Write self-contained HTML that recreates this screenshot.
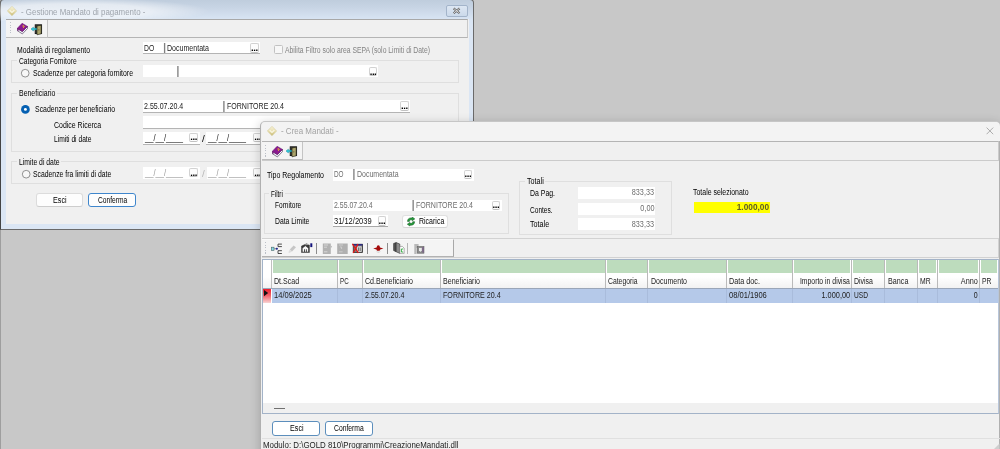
<!DOCTYPE html>
<html lang="it"><head><meta charset="utf-8"><title>Crea Mandati</title>
<style>
html,body{margin:0;padding:0;}
body{width:1000px;height:449px;overflow:hidden;background:#c8c8c8;position:relative;font-family:"Liberation Sans",sans-serif;font-size:11px;}
div,span,svg{position:absolute;box-sizing:border-box;}
.t{white-space:pre;}

.tb{background:#fff;}
.btn{background:#fdfdfd;border:1px solid #dcdcdc;border-bottom-color:#cdcdcd;border-radius:3px;}
.dots{background:#fdfdfd;border:1px solid #d2d2d2;border-bottom-color:#c2c2c2;border-radius:2px;}
.grp{border:1px solid #dfdfdf;}

</style></head><body>
<div id="root" style="left:0;top:0;width:1000px;height:449px;will-change:transform;">
<div style="left:0px;top:229px;width:1.2px;height:220px;background:#9e9e9e;"></div>
<div style="left:0;top:-1px;width:474px;height:231px;background:linear-gradient(180deg,#bfcddd 0,#c8d5e5 8px,#d8e4f3 19px,#dbe6f4 24px,#dbe6f4 100%);border:1px solid #6a6a6a;border-left:1.5px solid #444;border-radius:4px 4px 0 0;"></div>
<div style="left:6px;top:19px;width:463px;height:205px;background:#f0f0f0;"></div>
<div style="left:-60px;top:-2px;width:270px;height:26px;background:radial-gradient(ellipse closest-side at center,rgba(255,255,255,0.6) 0,rgba(255,255,255,0.55) 55%,rgba(255,255,255,0) 100%);"></div>
<svg style="left:7.2px;top:6.2px" width="10" height="10" viewBox="0 0 10 10"><defs><linearGradient id="g1" x1="0" y1="0" x2="0" y2="1"><stop offset="0" stop-color="#f6f1d8"/><stop offset="0.5" stop-color="#e9e0b2"/><stop offset="1" stop-color="#c7b970"/></linearGradient></defs><path d="M5 0.3 L9.7 5 L5 9.7 L0.3 5 Z" fill="url(#g1)" stroke="#d2c994" stroke-width="0.5"/><path d="M2.6 4.2 L5 6.4 L7.4 4.2" fill="none" stroke="#fbf8e8" stroke-width="1.1"/></svg>
<span id="t0" class="t" style="top:5.10px;font-size:9.5px;line-height:13px;color:#9fa5ad;left:20.8px;transform:scaleX(0.8324);transform-origin:left center;">- Gestione Mandato di pagamento -</span>
<div style="left:446px;top:5px;width:22px;height:12px;border:1px solid #a3b4ca;border-radius:2px;background:linear-gradient(180deg,#dde7f3,#cbd9ea);"></div>
<svg style="left:452px;top:7px" width="10" height="8" viewBox="0 0 10 8"><path d="M1.6 1.4 L7.6 6.2 M7.6 1.4 L1.6 6.2" stroke="#5c5c5c" stroke-width="2" fill="none"/><path d="M1.6 1.4 L7.6 6.2 M7.6 1.4 L1.6 6.2" stroke="#f4f4f4" stroke-width="0.8" fill="none"/></svg>
<div style="left:6px;top:19px;width:462px;height:19px;background:#f0f0f0;border:1px solid #b4b4b4;border-left:0;border-top-color:#a8a8a8;border-right-color:#c8c8c8;"></div>
<div style="left:6px;top:19.5px;width:41.5px;height:18px;background:#f4f4f4;border-right:1px solid #c4c4c4;border-bottom:1px solid #bcbcbc;"></div>
<div style="left:10.2px;top:22.3px;width:1px;height:12px;background:repeating-linear-gradient(180deg,#bcc0c8 0 1.1px,transparent 1.1px 2.6px);"></div>
<svg style="left:16.6px;top:23.3px" width="12" height="12" viewBox="0 0 12 12"><path d="M0.2 5.4 L5.4 8.6 L10.5 3.4 L10.5 5.5 L5.4 10.9 L0.2 7.6 Z" fill="#f4f4fa" stroke="#3a2a4a" stroke-width="0.6"/><path d="M5.1 0.3 L10.5 3.4 L5.4 8.6 L0.2 5.4 Z" fill="#8a1a90" stroke="#5e0e66" stroke-width="0.5"/><path d="M0.3 5.6 L0.3 7.5 L1.4 8.2 L1.4 6.3 Z" fill="#6a1270"/><path d="M5.4 3 L6.8 2.8 L7.2 3.8 L6 4.6 M5.2 5.8 L5.3 5.9" stroke="#f4c22c" stroke-width="1" fill="none"/></svg>
<svg style="left:30.8px;top:23.5px" width="12" height="12" viewBox="0 0 12 12"><rect x="4.2" y="0.8" width="6.4" height="8.8" fill="#3c3c30" stroke="#151515" stroke-width="0.9"/><path d="M6 2 L10.2 1.2 L10.2 9.8 L6 10.8 Z" fill="#aca66c" stroke="#1c1c12" stroke-width="0.6"/><path d="M7 6 L8.4 5.8" stroke="#55502c" stroke-width="0.7"/><path d="M0 5 L2.4 3.2 L2.4 4.3 L5.6 4.3 L5.6 5.8 L2.4 5.8 L2.4 6.9 Z" fill="#2ad4e6" stroke="#13788c" stroke-width="0.45"/></svg>
<span id="t1" class="t" style="top:45.10px;font-size:8.5px;line-height:11px;color:#000;left:17px;transform:scaleX(0.8045);transform-origin:left center;">Modalità di regolamento</span>
<div style="left:143px;top:42px;width:117px;height:12.4px;background:#fff;border-bottom:1px solid #b4b4b4;"></div>
<span id="t2" class="t" style="top:43.10px;font-size:8.5px;line-height:11px;color:#222;left:144px;transform:scaleX(0.8000);transform-origin:left center;">DO</span>
<div style="left:163px;top:43px;width:1px;height:10px;background:#f6f6f6;"></div>
<div style="left:164px;top:43px;width:1px;height:10px;background:#808080;"></div>
<div style="left:165px;top:43px;width:1px;height:10px;background:#dddddd;"></div>
<span id="t3" class="t" style="top:43.10px;font-size:8.5px;line-height:11px;color:#222;left:167.2px;transform:scaleX(0.8307);transform-origin:left center;">Documentata</span>
<div class="dots" style="left:250.2px;top:43.4px;width:8.6px;height:9.2px;"></div>
<span id="t4" class="t" style="top:41.10px;font-size:9.5px;line-height:13px;color:#000;font-weight:bold;left:251.1px;letter-spacing:-0.45px;">...</span>
<div style="left:274.2px;top:45.4px;width:8.4px;height:8.4px;background:#f7f7f7;border:0.8px solid #c2c2c2;border-radius:1.5px;"></div>
<span id="t5" class="t" style="top:45.10px;font-size:8.5px;line-height:11px;color:#838383;left:285px;transform:scaleX(0.8021);transform-origin:left center;">Abilita Filtro solo area SEPA (solo Limiti di Date)</span>
<div class="grp" style="left:11px;top:60px;width:447.5px;height:23px;"></div>
<div style="left:16.6px;top:59px;width:61.6px;height:3px;background:#f0f0f0;"></div>
<span id="t6" class="t" style="top:56.10px;font-size:8.5px;line-height:11px;color:#000;left:18.6px;transform:scaleX(0.7865);transform-origin:left center;">Categoria Fornitore</span>
<svg style="left:20.3px;top:67.8px" width="11" height="11" viewBox="0 0 11 11"><circle cx="5.2" cy="5.2" r="3.85" fill="#f7f7f7" stroke="#707070" stroke-width="0.75"/></svg>
<span id="t7" class="t" style="top:68.10px;font-size:8.5px;line-height:11px;color:#000;left:33px;transform:scaleX(0.8108);transform-origin:left center;">Scadenze per categoria fornitore</span>
<div style="left:143.4px;top:65px;width:234.8px;height:12px;background:#fff;"></div>
<div style="left:177px;top:66px;width:1px;height:11px;background:#9d9d9d;"></div>
<div style="left:178px;top:66px;width:1px;height:11px;background:#b7b7b7;"></div>
<div class="dots" style="left:368.8px;top:66.6px;width:8.6px;height:9.6px;"></div>
<span id="t8" class="t" style="top:65.10px;font-size:9.5px;line-height:13px;color:#000;font-weight:bold;left:369.70000000000005px;letter-spacing:-0.45px;">...</span>
<div class="grp" style="left:11px;top:92.6px;width:447.5px;height:59px;"></div>
<div style="left:16.6px;top:91.6px;width:40.3px;height:3px;background:#f0f0f0;"></div>
<span id="t9" class="t" style="top:88.10px;font-size:8.5px;line-height:11px;color:#000;left:18.6px;transform:scaleX(0.8172);transform-origin:left center;">Beneficiario</span>
<svg style="left:20.15px;top:103.55px" width="11" height="11" viewBox="0 0 11 11"><circle cx="5.4" cy="5.4" r="4.35" fill="#0560b2"/><circle cx="5.4" cy="5.4" r="1.45" fill="#fff"/></svg>
<span id="t10" class="t" style="top:104.10px;font-size:8.5px;line-height:11px;color:#000;left:34.6px;transform:scaleX(0.8159);transform-origin:left center;">Scadenze per beneficiario</span>
<div style="left:143px;top:100px;width:267.2px;height:12.6px;background:#fff;border-bottom:1px solid #b4b4b4;"></div>
<span id="t11" class="t" style="top:101.10px;font-size:8.5px;line-height:11px;color:#222;left:144.4px;transform:scaleX(0.8294);transform-origin:left center;">2.55.07.20.4</span>
<div style="left:223px;top:101px;width:1px;height:10.6px;background:#9d9d9d;"></div>
<div style="left:224px;top:101px;width:1px;height:10.6px;background:#b7b7b7;"></div>
<span id="t12" class="t" style="top:101.10px;font-size:8.5px;line-height:11px;color:#222;left:226.6px;transform:scaleX(0.8283);transform-origin:left center;">FORNITORE 20.4</span>
<div class="dots" style="left:400.2px;top:101.4px;width:8.6px;height:9.2px;"></div>
<span id="t13" class="t" style="top:99.10px;font-size:9.5px;line-height:13px;color:#000;font-weight:bold;left:401.1px;letter-spacing:-0.45px;">...</span>
<span id="t14" class="t" style="top:120.10px;font-size:8.5px;line-height:11px;color:#000;left:54px;transform:scaleX(0.8189);transform-origin:left center;">Codice Ricerca</span>
<div style="left:143px;top:116.4px;width:167px;height:12.2px;background:#fff;border-bottom:1px solid #b4b4b4;"></div>
<span id="t15" class="t" style="top:134.10px;font-size:8.5px;line-height:11px;color:#000;left:54px;transform:scaleX(0.7838);transform-origin:left center;">Limiti di date</span>
<div style="left:143px;top:131.6px;width:56.8px;height:13px;background:#fff;border-bottom:1px solid #b4b4b4;"></div>
<span id="t16" class="t" style="top:133.10px;font-size:8.5px;line-height:11px;color:#222;left:144.6px;transform:scaleX(0.8931);transform-origin:left center;">__/__/____</span>
<div class="dots" style="left:189.4px;top:133px;width:8.6px;height:9.2px;"></div>
<span id="t17" class="t" style="top:130.10px;font-size:9.5px;line-height:13px;color:#000;font-weight:bold;left:190.3px;letter-spacing:-0.45px;">...</span>
<span id="t18" class="t" style="top:134.10px;font-size:8.5px;line-height:11px;color:#000;left:201.6px;transform:scaleX(1.1789);transform-origin:left center;">/</span>
<div style="left:206.4px;top:131.6px;width:56.8px;height:13px;background:#fff;border-bottom:1px solid #b4b4b4;"></div>
<span id="t19" class="t" style="top:133.10px;font-size:8.5px;line-height:11px;color:#222;left:208px;transform:scaleX(0.8931);transform-origin:left center;">__/__/____</span>
<div class="dots" style="left:253.4px;top:133px;width:8.6px;height:9.2px;"></div>
<span id="t20" class="t" style="top:130.10px;font-size:9.5px;line-height:13px;color:#000;font-weight:bold;left:254.29999999999998px;letter-spacing:-0.45px;">...</span>
<div class="grp" style="left:11px;top:161.2px;width:447.5px;height:22.4px;"></div>
<div style="left:16.6px;top:160.2px;width:44.6px;height:3px;background:#f0f0f0;"></div>
<span id="t21" class="t" style="top:157.10px;font-size:8.5px;line-height:11px;color:#000;left:18.6px;transform:scaleX(0.8030);transform-origin:left center;">Limite di date</span>
<svg style="left:20.5px;top:169.2px" width="11" height="11" viewBox="0 0 11 11"><circle cx="5.2" cy="5.2" r="3.85" fill="#f7f7f7" stroke="#707070" stroke-width="0.75"/></svg>
<span id="t22" class="t" style="top:169.10px;font-size:8.5px;line-height:11px;color:#000;left:32.8px;transform:scaleX(0.8035);transform-origin:left center;">Scadenze fra limiti di date</span>
<div style="left:143.4px;top:167px;width:56.4px;height:12px;background:#fff;"></div>
<span id="t23" class="t" style="top:168.10px;font-size:8.5px;line-height:11px;color:#9a9a9a;left:144.6px;transform:scaleX(0.8931);transform-origin:left center;">__/__/____</span>
<div class="dots" style="left:189.4px;top:168px;width:8.6px;height:9.2px;"></div>
<span id="t24" class="t" style="top:166.10px;font-size:9.5px;line-height:13px;color:#000;font-weight:bold;left:190.3px;letter-spacing:-0.45px;">...</span>
<span id="t25" class="t" style="top:169.10px;font-size:8.5px;line-height:11px;color:#b8b8b8;left:201.8px;transform:scaleX(1.1789);transform-origin:left center;">/</span>
<div style="left:207px;top:167px;width:56.2px;height:12px;background:#fff;"></div>
<span id="t26" class="t" style="top:168.10px;font-size:8.5px;line-height:11px;color:#9a9a9a;left:208px;transform:scaleX(0.8931);transform-origin:left center;">__/__/____</span>
<div class="dots" style="left:253.4px;top:168px;width:8.6px;height:9.2px;"></div>
<span id="t27" class="t" style="top:166.10px;font-size:9.5px;line-height:13px;color:#000;font-weight:bold;left:254.29999999999998px;letter-spacing:-0.45px;">...</span>
<div class="btn" style="left:36px;top:193px;width:47px;height:14.4px;"></div>
<span id="t28" class="t" style="top:195.10px;font-size:8.5px;line-height:11px;color:#000;left:52.5px;transform:scaleX(0.8467);transform-origin:left center;">Esci</span>
<div class="btn" style="left:88.4px;top:193px;width:47.6px;height:14.4px;border:1px solid #3f86cc;"></div>
<span id="t29" class="t" style="top:195.10px;font-size:8.5px;line-height:11px;color:#000;left:97.8px;transform:scaleX(0.7823);transform-origin:left center;">Conferma</span>
<div style="left:260.2px;top:121.4px;width:740px;height:340px;background:#f0f0f0;border:1px solid #b0b0b0;border-radius:5px 5px 0 0;border-top-color:#c6c6c6;box-shadow:0 2px 10px 1px rgba(0,0,0,0.16);"></div>
<div style="left:261.6px;top:122.4px;width:738px;height:19px;background:#f3f3f3;border-radius:4px 4px 0 0;"></div>
<svg style="left:267px;top:126.2px" width="10" height="10" viewBox="0 0 10 10"><defs><linearGradient id="g2" x1="0" y1="0" x2="0" y2="1"><stop offset="0" stop-color="#f6f1d8"/><stop offset="0.5" stop-color="#e9e0b2"/><stop offset="1" stop-color="#c7b970"/></linearGradient></defs><path d="M5 0.3 L9.7 5 L5 9.7 L0.3 5 Z" fill="url(#g2)" stroke="#d2c994" stroke-width="0.5"/><path d="M2.6 4.2 L5 6.4 L7.4 4.2" fill="none" stroke="#fbf8e8" stroke-width="1.1"/></svg>
<span id="t30" class="t" style="top:124.10px;font-size:9.5px;line-height:13px;color:#a2a2a2;left:281px;transform:scaleX(0.8392);transform-origin:left center;">- Crea Mandati -</span>
<svg style="left:986.4px;top:127px" width="8" height="8" viewBox="0 0 8 8"><path d="M0.6 0.6 L7.2 7.2 M7.2 0.6 L0.6 7.2" stroke="#9a9a9a" stroke-width="0.8" fill="none"/></svg>
<div style="left:261.6px;top:141px;width:737.4px;height:19.6px;background:#f0f0f0;border:1px solid #b4b4b4;border-left:0;border-bottom-color:#cbcbcb;border-right-color:#cbcbcb;"></div>
<div style="left:261.6px;top:142px;width:41px;height:18px;background:#f4f4f4;border-right:1px solid #c4c4c4;border-bottom:1px solid #bcbcbc;"></div>
<div style="left:265.4px;top:145px;width:1px;height:12px;background:repeating-linear-gradient(180deg,#bcc0c8 0 1.1px,transparent 1.1px 2.6px);"></div>
<svg style="left:271.6px;top:145.6px" width="12" height="12" viewBox="0 0 12 12"><path d="M0.2 5.4 L5.4 8.6 L10.5 3.4 L10.5 5.5 L5.4 10.9 L0.2 7.6 Z" fill="#f4f4fa" stroke="#3a2a4a" stroke-width="0.6"/><path d="M5.1 0.3 L10.5 3.4 L5.4 8.6 L0.2 5.4 Z" fill="#8a1a90" stroke="#5e0e66" stroke-width="0.5"/><path d="M0.3 5.6 L0.3 7.5 L1.4 8.2 L1.4 6.3 Z" fill="#6a1270"/><path d="M5.4 3 L6.8 2.8 L7.2 3.8 L6 4.6 M5.2 5.8 L5.3 5.9" stroke="#f4c22c" stroke-width="1" fill="none"/></svg>
<svg style="left:286px;top:145.7px" width="12" height="12" viewBox="0 0 12 12"><rect x="4.2" y="0.8" width="6.4" height="8.8" fill="#3c3c30" stroke="#151515" stroke-width="0.9"/><path d="M6 2 L10.2 1.2 L10.2 9.8 L6 10.8 Z" fill="#aca66c" stroke="#1c1c12" stroke-width="0.6"/><path d="M7 6 L8.4 5.8" stroke="#55502c" stroke-width="0.7"/><path d="M0 5 L2.4 3.2 L2.4 4.3 L5.6 4.3 L5.6 5.8 L2.4 5.8 L2.4 6.9 Z" fill="#2ad4e6" stroke="#13788c" stroke-width="0.45"/></svg>
<span id="t31" class="t" style="top:170.10px;font-size:8.5px;line-height:11px;color:#000;left:266.6px;transform:scaleX(0.8242);transform-origin:left center;">Tipo Regolamento</span>
<div style="left:332.8px;top:168.6px;width:141px;height:12px;background:#fff;"></div>
<span id="t32" class="t" style="top:169.10px;font-size:8.5px;line-height:11px;color:#6d6d6d;left:334px;transform:scaleX(0.7529);transform-origin:left center;">DO</span>
<div style="left:353px;top:169px;width:1px;height:11px;background:#9d9d9d;"></div>
<div style="left:354px;top:169px;width:1px;height:11px;background:#b7b7b7;"></div>
<span id="t33" class="t" style="top:169.10px;font-size:8.5px;line-height:11px;color:#6d6d6d;left:357px;transform:scaleX(0.8227);transform-origin:left center;">Documentata</span>
<div class="dots" style="left:463.7px;top:170.2px;width:8.6px;height:9.2px;"></div>
<span id="t34" class="t" style="top:167.10px;font-size:9.5px;line-height:13px;color:#000;font-weight:bold;left:464.6px;letter-spacing:-0.45px;">...</span>
<div class="grp" style="left:264.4px;top:193px;width:244.8px;height:41.4px;"></div>
<div style="left:269.3px;top:192px;width:15.8px;height:3px;background:#f0f0f0;"></div>
<span id="t35" class="t" style="top:189.10px;font-size:8.5px;line-height:11px;color:#000;left:271.3px;transform:scaleX(0.7346);transform-origin:left center;">Filtri</span>
<span id="t36" class="t" style="top:200.10px;font-size:8.5px;line-height:11px;color:#000;left:274.8px;transform:scaleX(0.7702);transform-origin:left center;">Fornitore</span>
<div style="left:332.8px;top:199.6px;width:168.8px;height:11.8px;background:#fff;"></div>
<span id="t37" class="t" style="top:200.10px;font-size:8.5px;line-height:11px;color:#6d6d6d;left:334px;transform:scaleX(0.8167);transform-origin:left center;">2.55.07.20.4</span>
<div style="left:412px;top:200px;width:1px;height:11px;background:#bdbdbd;"></div>
<div style="left:413px;top:200px;width:1px;height:11px;background:#979797;"></div>
<span id="t38" class="t" style="top:200.10px;font-size:8.5px;line-height:11px;color:#6d6d6d;left:415.6px;transform:scaleX(0.8283);transform-origin:left center;">FORNITORE 20.4</span>
<div class="dots" style="left:491.6px;top:201px;width:8.6px;height:9.2px;"></div>
<span id="t39" class="t" style="top:198.10px;font-size:9.5px;line-height:13px;color:#000;font-weight:bold;left:492.50000000000006px;letter-spacing:-0.45px;">...</span>
<span id="t40" class="t" style="top:216.10px;font-size:8.5px;line-height:11px;color:#000;left:274.8px;transform:scaleX(0.8000);transform-origin:left center;">Data Limite</span>
<div style="left:332.8px;top:215px;width:54.8px;height:12.4px;background:#fff;border-bottom:1px solid #a8a8a8;"></div>
<span id="t41" class="t" style="top:216.10px;font-size:8.5px;line-height:11px;color:#111;left:334.2px;transform:scaleX(0.8837);transform-origin:left center;">31/12/2039</span>
<div class="dots" style="left:377.7px;top:216.4px;width:8.6px;height:9.2px;"></div>
<span id="t42" class="t" style="top:214.10px;font-size:9.5px;line-height:13px;color:#000;font-weight:bold;left:378.6px;letter-spacing:-0.45px;">...</span>
<div class="btn" style="left:401.6px;top:214.6px;width:46.6px;height:13.2px;background:#fefefe;border-color:#e0e0e0;border-bottom-color:#d4d4d4;"></div>
<svg style="left:407.2px;top:216.9px" width="9" height="10" viewBox="0 0 9 10"><path d="M0.5 4.4 C0.5 2 2.2 0.9 4 0.9 L5.3 0.9 L5.3 0.1 L7.8 1.9 L5.3 3.7 L5.3 2.8 L4 2.8 C3 2.8 2.5 3.3 2.4 4.4 Z" fill="#25a03a" stroke="#0c4a1c" stroke-width="0.5"/><path d="M7.6 4.7 C7.6 7.1 5.9 8.2 4.1 8.2 L2.8 8.2 L2.8 9 L0.3 7.2 L2.8 5.4 L2.8 6.3 L4.1 6.3 C5.1 6.3 5.6 5.8 5.7 4.7 Z" fill="#25a03a" stroke="#0c4a1c" stroke-width="0.5"/></svg>
<span id="t43" class="t" style="top:216.10px;font-size:8.5px;line-height:11px;color:#000;left:418.7px;transform:scaleX(0.8240);transform-origin:left center;">Ricarica</span>
<div class="grp" style="left:519px;top:181px;width:152.6px;height:53.6px;"></div>
<div style="left:524.5px;top:180px;width:20.8px;height:3px;background:#f0f0f0;"></div>
<span id="t44" class="t" style="top:176.10px;font-size:8.5px;line-height:11px;color:#000;left:526.5px;transform:scaleX(0.8466);transform-origin:left center;">Totali</span>
<span id="t45" class="t" style="top:188.10px;font-size:8.5px;line-height:11px;color:#000;left:529.6px;transform:scaleX(0.8138);transform-origin:left center;">Da Pag.</span>
<div style="left:577.5px;top:187px;width:77.6px;height:11.8px;background:#fff;"></div>
<span id="t46" class="t" style="top:187.10px;font-size:8.5px;line-height:11px;color:#6d6d6d;right:345.79999999999995px;transform:scaleX(0.8538);transform-origin:right center;">833,33</span>
<span id="t47" class="t" style="top:205.10px;font-size:8.5px;line-height:11px;color:#000;left:529.6px;transform:scaleX(0.7714);transform-origin:left center;">Contes.</span>
<div style="left:577.5px;top:202.8px;width:77.6px;height:11.8px;background:#fff;"></div>
<span id="t48" class="t" style="top:203.10px;font-size:8.5px;line-height:11px;color:#6d6d6d;right:345.79999999999995px;transform:scaleX(0.8582);transform-origin:right center;">0,00</span>
<span id="t49" class="t" style="top:219.10px;font-size:8.5px;line-height:11px;color:#000;left:529.6px;transform:scaleX(0.8463);transform-origin:left center;">Totale</span>
<div style="left:577.5px;top:218.4px;width:77.6px;height:11.8px;background:#fff;"></div>
<span id="t50" class="t" style="top:219.10px;font-size:8.5px;line-height:11px;color:#6d6d6d;right:345.79999999999995px;transform:scaleX(0.8538);transform-origin:right center;">833,33</span>
<span id="t51" class="t" style="top:187.10px;font-size:8.5px;line-height:11px;color:#000;left:693.3px;transform:scaleX(0.8171);transform-origin:left center;">Totale selezionato</span>
<div style="left:693.6px;top:201.6px;width:76.6px;height:11.4px;background:#ffff00;"></div>
<span id="t52" class="t" style="top:202.10px;font-size:8.5px;line-height:11px;color:#5e5e24;font-weight:bold;right:230.60000000000002px;transform:scaleX(0.9790);transform-origin:right center;">1.000,00</span>
<div style="left:261.6px;top:238.2px;width:737px;height:19.6px;background:#f0f0f0;border:1px solid #d2d2d2;border-left:0;"></div>
<div style="left:261.6px;top:239.4px;width:192.6px;height:17.6px;background:#f4f4f4;border-right:1px solid #a8a8a8;border-bottom:1px solid #b2b2b2;border-top:1px solid #fafafa;"></div>
<div style="left:265.4px;top:242px;width:1px;height:12px;background:repeating-linear-gradient(180deg,#bcc0c8 0 1.1px,transparent 1.1px 2.6px);"></div>
<svg style="left:271px;top:243px" width="12" height="12" viewBox="0 0 12 12"><rect x="0.4" y="4.2" width="2.6" height="3.2" fill="#86dde6" stroke="#4a6468" stroke-width="0.6"/><path d="M3.4 5.8 L4.8 5.8" stroke="#222" stroke-width="0.7"/><path d="M4.6 5.8 L5.9 4.5 L7.1 5.8 L5.9 7.1 Z" fill="#151a8c"/><path d="M10.9 1.1 L7 1.1 L7 3.6 L10.9 3.6 M10.9 7.7 L7 7.7 L7 10.5 L10.9 10.5" stroke="#222" stroke-width="0.8" fill="none"/></svg>
<svg style="left:288px;top:244.6px" width="9" height="9" viewBox="0 0 9 9"><path d="M5.6 0.4 L8 2.2 L4 6.4 L1.8 4.6 Z" fill="#c6c6c6"/><path d="M1.8 4.6 L4 6.4 L1.2 8 L0.4 7.2 Z" fill="#dedede"/></svg>
<svg style="left:301.4px;top:243.4px" width="12" height="10" viewBox="0 0 12 10"><path d="M0.5 9.6 L0.5 3 L5.6 0.8 L8.4 2 L8.4 9.6 Z" fill="#3a3a3a" stroke="#1a1a1a" stroke-width="0.4"/><path d="M1.6 8.8 L1.6 5.2 L4.4 3 L7.2 5.2 L7.2 8.8 L5.8 8.8 L5.8 6.2 L4.9 6.2 L4.9 8.8 L3.9 8.8 L3.9 6.2 L3 6.2 L3 8.8 Z" fill="#f6f6f6"/><path d="M4.2 1.8 L8.4 1.2" stroke="#eee" stroke-width="0.6"/><rect x="9.3" y="0.3" width="2" height="3.8" fill="#12127c"/></svg>
<div style="left:316px;top:242.8px;width:1px;height:11.4px;background:#8c8c8c;"></div>
<svg style="left:322px;top:242.6px" width="11" height="12" viewBox="0 0 11 12"><rect x="0.8" y="0.5" width="8" height="10.5" fill="#b2b2b2"/><path d="M8.8 2.6 L10.2 3.8 L8.8 5 Z" fill="#b8b8b8"/><path d="M2 2 L6 2 M2 4.2 L5 4.2 M2 8.8 L5.4 8.8" stroke="#d6d6d6" stroke-width="1"/></svg>
<svg style="left:337px;top:242.6px" width="12" height="12" viewBox="0 0 12 12"><rect x="0.2" y="0.5" width="10.5" height="10.5" fill="#b0b0b0"/><path d="M2 2 L6 2 M3 4 L4.6 4 L4.6 6 M2 8.8 L5.6 8.8" stroke="#d0d0d0" stroke-width="0.9" fill="none"/></svg>
<svg style="left:352px;top:243px" width="12" height="11" viewBox="0 0 12 11"><rect x="1.2" y="1.2" width="9.4" height="8.4" fill="#7c7c7c" stroke="#222" stroke-width="0.7"/><rect x="1.4" y="1.2" width="9" height="1.3" fill="#22228a"/><path d="M5.2 3.4 L9.6 3.4 L9.6 8.8 L5.2 8.8 Z" fill="#e4e4e4"/><path d="M6.6 4.4 L6.6 8 M8.2 4.4 L8.2 8" stroke="#333" stroke-width="0.7"/><path d="M0.3 0.9 L6.4 9.9 M6 1 L1.2 9.9" stroke="#e81414" stroke-width="1.2" fill="none"/></svg>
<div style="left:366.8px;top:242.8px;width:1px;height:11.4px;background:#8c8c8c;"></div>
<svg style="left:372.6px;top:245px" width="11" height="9" viewBox="0 0 11 9"><path d="M2.6 6.6 L8.2 6.6 L5.4 8 Z" fill="#d4d4d4"/><path d="M3.6 2.4 Q3.8 0.3 5.3 0.3 Q6.8 0.3 7 2.4 L10.4 3.5 L7.2 4.6 L6.6 5.8 L4 5.8 L3.4 4.6 L0.2 3.5 Z" fill="#a30a0a"/></svg>
<div style="left:386.8px;top:242.8px;width:1px;height:11.4px;background:#8c8c8c;"></div>
<svg style="left:392.6px;top:242.4px" width="12" height="13" viewBox="0 0 12 13"><path d="M0.6 1.4 L3.2 0.6 L3.2 9.8 L0.6 8.6 Z" fill="#565656" stroke="#1c1c1c" stroke-width="0.5"/><path d="M3.2 0.6 L6.8 2 L6.8 11.4 L3.2 9.8 Z" fill="#8c8c8c" stroke="#1c1c1c" stroke-width="0.5"/><path d="M6.8 4.4 L9.4 4.4 L11.2 6.2 L11.2 11.4 L6.8 11.4 Z" fill="#fdfdfd" stroke="#6a6a6a" stroke-width="0.5"/><path d="M10.2 7 L8.4 7 L8.4 10 L10.2 10" fill="none" stroke="#28a838" stroke-width="0.9"/></svg>
<div style="left:407.2px;top:242.8px;width:1px;height:11.4px;background:#b4b4b4;"></div>
<svg style="left:413.8px;top:243.6px" width="11" height="10" viewBox="0 0 11 10"><path d="M0.3 1 L4.6 1 M0.3 3 L4.6 3 M0.3 5 L2.6 5 M0.3 7 L2.6 7 M0.3 9 L2.6 9" stroke="#707070" stroke-width="0.9"/><rect x="3.2" y="2.4" width="6.8" height="6.8" fill="#8c8c8c" stroke="#5a5a5a" stroke-width="0.5"/><path d="M5 4 L7.8 4 L7.8 6.2 L6.4 8 L5 6.2 Z" fill="#ececec"/><path d="M8.4 3 L9.6 3 L9.6 8.6 L8.4 8.6 Z" fill="#7a5a8a"/></svg>
<div style="left:261.6px;top:258.6px;width:737px;height:155px;background:#fff;border:1px solid #a3b3c8;border-right-color:#b8c6da;"></div>
<div style="left:262.6px;top:259.6px;width:735.4px;height:28px;background:linear-gradient(180deg,#fff 0,#fff 60%,#f2f2f2 100%);"></div>
<div style="left:262.6px;top:287.6px;width:735.4px;height:1px;background:#9aa6b8;"></div>
<div style="left:272px;top:288.6px;width:726px;height:14px;background:#b5c9e9;"></div>
<div style="left:273.0px;top:260.4px;width:63.7px;height:13px;background:#bddcbd;"></div>
<div style="left:337.0px;top:259.6px;width:1px;height:28px;background:#bababa;"></div>
<div style="left:337.0px;top:288.6px;width:1px;height:14px;background:#a9bcdc;"></div>
<div style="left:339.0px;top:260.4px;width:22.7px;height:13px;background:#bddcbd;"></div>
<div style="left:362.0px;top:259.6px;width:1px;height:28px;background:#bababa;"></div>
<div style="left:362.0px;top:288.6px;width:1px;height:14px;background:#a9bcdc;"></div>
<div style="left:364.0px;top:260.4px;width:75.7px;height:13px;background:#bddcbd;"></div>
<div style="left:440.0px;top:259.6px;width:1px;height:28px;background:#bababa;"></div>
<div style="left:440.0px;top:288.6px;width:1px;height:14px;background:#a9bcdc;"></div>
<div style="left:442.0px;top:260.4px;width:162.7px;height:13px;background:#bddcbd;"></div>
<div style="left:605.0px;top:259.6px;width:1px;height:28px;background:#bababa;"></div>
<div style="left:605.0px;top:288.6px;width:1px;height:14px;background:#a9bcdc;"></div>
<div style="left:607.0px;top:260.4px;width:39.99999999999996px;height:13px;background:#bddcbd;"></div>
<div style="left:647.3px;top:259.6px;width:1px;height:28px;background:#bababa;"></div>
<div style="left:647.3px;top:288.6px;width:1px;height:14px;background:#a9bcdc;"></div>
<div style="left:649.3px;top:260.4px;width:76.40000000000005px;height:13px;background:#bddcbd;"></div>
<div style="left:726.0px;top:259.6px;width:1px;height:28px;background:#bababa;"></div>
<div style="left:726.0px;top:288.6px;width:1px;height:14px;background:#a9bcdc;"></div>
<div style="left:728.0px;top:260.4px;width:63.99999999999996px;height:13px;background:#bddcbd;"></div>
<div style="left:792.3px;top:259.6px;width:1px;height:28px;background:#bababa;"></div>
<div style="left:792.3px;top:288.6px;width:1px;height:14px;background:#a9bcdc;"></div>
<div style="left:794.3px;top:260.4px;width:56.2px;height:13px;background:#bddcbd;"></div>
<div style="left:850.8px;top:259.6px;width:1px;height:28px;background:#bababa;"></div>
<div style="left:850.8px;top:288.6px;width:1px;height:14px;background:#a9bcdc;"></div>
<div style="left:852.8px;top:260.4px;width:31.2px;height:13px;background:#bddcbd;"></div>
<div style="left:884.3px;top:259.6px;width:1px;height:28px;background:#bababa;"></div>
<div style="left:884.3px;top:288.6px;width:1px;height:14px;background:#a9bcdc;"></div>
<div style="left:886.3px;top:260.4px;width:30.300000000000022px;height:13px;background:#bddcbd;"></div>
<div style="left:916.9px;top:259.6px;width:1px;height:28px;background:#bababa;"></div>
<div style="left:916.9px;top:288.6px;width:1px;height:14px;background:#a9bcdc;"></div>
<div style="left:918.9px;top:260.4px;width:17.599999999999977px;height:13px;background:#bddcbd;"></div>
<div style="left:936.8px;top:259.6px;width:1px;height:28px;background:#bababa;"></div>
<div style="left:936.8px;top:288.6px;width:1px;height:14px;background:#a9bcdc;"></div>
<div style="left:938.8px;top:260.4px;width:39.7px;height:13px;background:#bddcbd;"></div>
<div style="left:978.8px;top:259.6px;width:1px;height:28px;background:#bababa;"></div>
<div style="left:978.8px;top:288.6px;width:1px;height:14px;background:#a9bcdc;"></div>
<div style="left:980.8px;top:260.4px;width:16.60000000000009px;height:13px;background:#bddcbd;"></div>
<div style="left:271px;top:259.6px;width:1px;height:28px;background:#c0c0c0;"></div>
<span id="t53" class="t" style="top:276.10px;font-size:8.5px;line-height:11px;color:#222;left:274.3px;transform:scaleX(0.8331);transform-origin:left center;">Dt.Scad</span>
<span id="t54" class="t" style="top:290.10px;font-size:8.5px;line-height:11px;color:#222;left:274.3px;transform:scaleX(0.8884);transform-origin:left center;">14/09/2025</span>
<span id="t55" class="t" style="top:276.10px;font-size:8.5px;line-height:11px;color:#222;left:340.3px;transform:scaleX(0.7280);transform-origin:left center;">PC</span>
<span id="t56" class="t" style="top:276.10px;font-size:8.5px;line-height:11px;color:#222;left:365.3px;transform:scaleX(0.8327);transform-origin:left center;">Cd.Beneficiario</span>
<span id="t57" class="t" style="top:290.10px;font-size:8.5px;line-height:11px;color:#222;left:365.3px;transform:scaleX(0.8336);transform-origin:left center;">2.55.07.20.4</span>
<span id="t58" class="t" style="top:276.10px;font-size:8.5px;line-height:11px;color:#222;left:443.3px;transform:scaleX(0.8329);transform-origin:left center;">Beneficiario</span>
<span id="t59" class="t" style="top:290.10px;font-size:8.5px;line-height:11px;color:#222;left:443.3px;transform:scaleX(0.8371);transform-origin:left center;">FORNITORE 20.4</span>
<span id="t60" class="t" style="top:276.10px;font-size:8.5px;line-height:11px;color:#222;left:608.3px;transform:scaleX(0.8031);transform-origin:left center;">Categoria</span>
<span id="t61" class="t" style="top:276.10px;font-size:8.5px;line-height:11px;color:#222;left:650.5999999999999px;transform:scaleX(0.8282);transform-origin:left center;">Documento</span>
<span id="t62" class="t" style="top:276.10px;font-size:8.5px;line-height:11px;color:#222;left:729.3px;transform:scaleX(0.8519);transform-origin:left center;">Data doc.</span>
<span id="t63" class="t" style="top:290.10px;font-size:8.5px;line-height:11px;color:#222;left:729.3px;transform:scaleX(0.8884);transform-origin:left center;">08/01/1906</span>
<span id="t64" class="t" style="top:276.10px;font-size:8.5px;line-height:11px;color:#222;right:150.0px;transform:scaleX(0.8079);transform-origin:right center;">Importo in divisa</span>
<span id="t65" class="t" style="top:290.10px;font-size:8.5px;line-height:11px;color:#222;right:150.0px;transform:scaleX(0.8642);transform-origin:right center;">1.000,00</span>
<span id="t66" class="t" style="top:276.10px;font-size:8.5px;line-height:11px;color:#222;left:854.0999999999999px;transform:scaleX(0.8205);transform-origin:left center;">Divisa</span>
<span id="t67" class="t" style="top:290.10px;font-size:8.5px;line-height:11px;color:#222;left:854.0999999999999px;transform:scaleX(0.7798);transform-origin:left center;">USD</span>
<span id="t68" class="t" style="top:276.10px;font-size:8.5px;line-height:11px;color:#222;left:887.5999999999999px;transform:scaleX(0.8461);transform-origin:left center;">Banca</span>
<span id="t69" class="t" style="top:276.10px;font-size:8.5px;line-height:11px;color:#222;left:920.1999999999999px;transform:scaleX(0.8009);transform-origin:left center;">MR</span>
<span id="t70" class="t" style="top:276.10px;font-size:8.5px;line-height:11px;color:#222;right:22.0px;transform:scaleX(0.8560);transform-origin:right center;">Anno</span>
<span id="t71" class="t" style="top:290.10px;font-size:8.5px;line-height:11px;color:#222;right:22.0px;transform:scaleX(0.8238);transform-origin:right center;">0</span>
<span id="t72" class="t" style="top:276.10px;font-size:8.5px;line-height:11px;color:#222;left:982.0999999999999px;transform:scaleX(0.7958);transform-origin:left center;">PR</span>
<div style="left:262.6px;top:288.6px;width:8.6px;height:14px;background:linear-gradient(180deg,#ee1c2c 0,#f06068 45%,#f8d4d4 100%);"></div>
<svg style="left:264.2px;top:290px" width="5" height="7" viewBox="0 0 5 7"><path d="M0 0 L4.2 3.1 L0 6.2 Z" fill="#111"/></svg>
<div style="left:262.6px;top:403.2px;width:735.4px;height:9.4px;background:#f0f0f0;"></div>
<div style="left:273.6px;top:407.5px;width:11.2px;height:1px;background:#707070;"></div>
<div class="btn" style="left:272px;top:420.8px;width:48px;height:14.8px;border:1px solid #5c8ebc;background:#fff;"></div>
<span id="t73" class="t" style="top:423.10px;font-size:8.5px;line-height:11px;color:#000;left:289.5px;transform:scaleX(0.8467);transform-origin:left center;">Esci</span>
<div class="btn" style="left:324.6px;top:420.8px;width:48px;height:14.8px;border:1px solid #5c8ebc;background:#fff;"></div>
<span id="t74" class="t" style="top:423.10px;font-size:8.5px;line-height:11px;color:#000;left:334px;transform:scaleX(0.7983);transform-origin:left center;">Conferma</span>
<div style="left:261.6px;top:438.4px;width:738.4px;height:1px;background:#e0e0e0;"></div>
<span id="t75" class="t" style="top:439.10px;font-size:9px;line-height:12px;color:#222;left:263px;transform:scaleX(0.8778);transform-origin:left center;">Modulo: D:\GOLD 810\Programmi\CreazioneMandati.dll</span>
<svg style="left:993px;top:443px" width="7" height="6" viewBox="0 0 7 6"><path d="M6.5 0.5 L6.5 6 L1 6 Z" fill="#cfcfcf"/></svg>
</div>
</body></html>
